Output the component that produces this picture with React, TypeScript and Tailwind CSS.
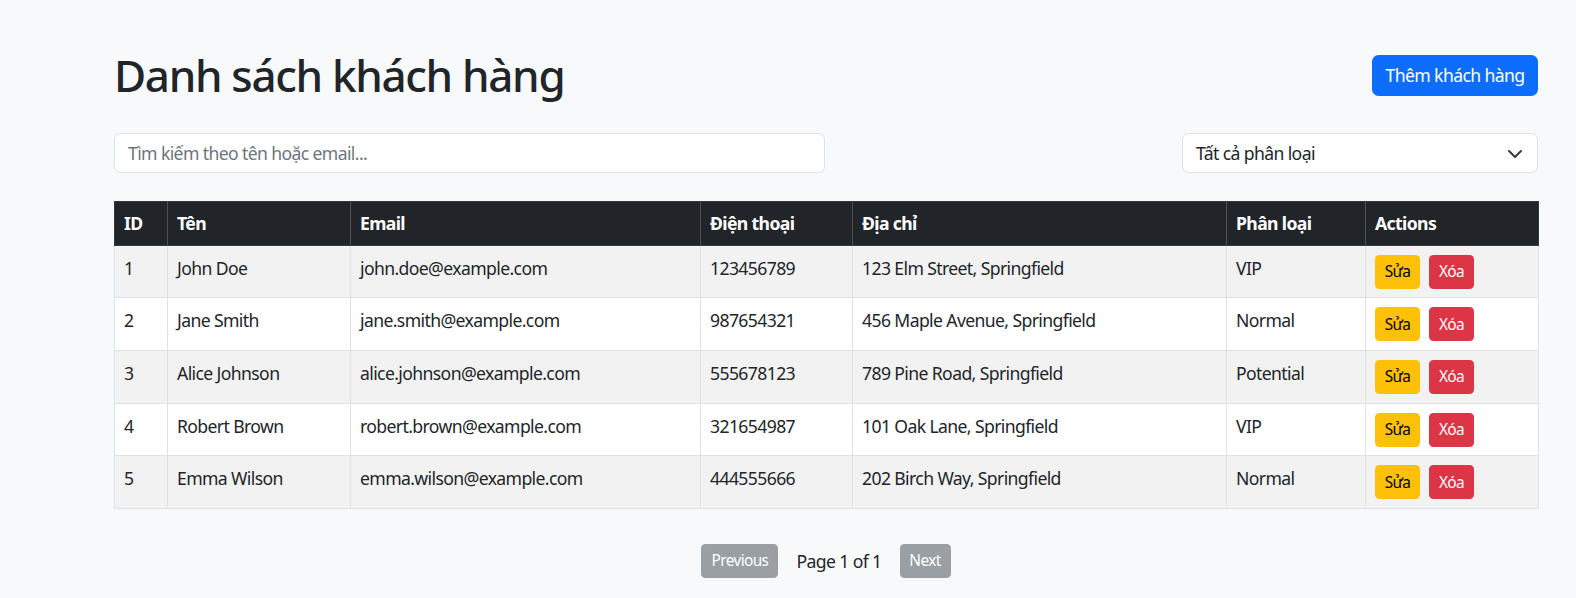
import React from 'react'

type Customer = {
  id: number
  name: string
  email: string
  phone: string
  address: string
  type: string
}

const customers: Customer[] = [
  { id: 1, name: 'John Doe', email: 'john.doe@example.com', phone: '123456789', address: '123 Elm Street, Springfield', type: 'VIP' },
  { id: 2, name: 'Jane Smith', email: 'jane.smith@example.com', phone: '987654321', address: '456 Maple Avenue, Springfield', type: 'Normal' },
  { id: 3, name: 'Alice Johnson', email: 'alice.johnson@example.com', phone: '555678123', address: '789 Pine Road, Springfield', type: 'Potential' },
  { id: 4, name: 'Robert Brown', email: 'robert.brown@example.com', phone: '321654987', address: '101 Oak Lane, Springfield', type: 'VIP' },
  { id: 5, name: 'Emma Wilson', email: 'emma.wilson@example.com', phone: '444555666', address: '202 Birch Way, Springfield', type: 'Normal' },
]

const headers = ['ID', 'Tên', 'Email', 'Điện thoại', 'Địa chỉ', 'Phân loại', 'Actions']
const widths = ['w-[53px]', 'w-[183px]', 'w-[350px]', 'w-[152px]', 'w-[374px]', 'w-[139px]', 'w-[173px]']

export default function App() {
  return (
    <div className="min-h-screen bg-[#f8f9fa] text-[#212529] font-['Noto_Sans',sans-serif] text-[17.6px] leading-[1.5] tracking-[-0.035em]">
      <div className="pl-[114px] pr-[38px] pt-[49px] pb-[20px]">
        <div className="flex items-center justify-between mb-[31px]">
          <h1 className="text-[44px] leading-[1.2] font-medium tracking-[-0.03em]">Danh sách khách hàng</h1>
          <button className="h-[41px] w-[166px] rounded-[6.6px] bg-[#0d6efd] text-white text-[17.6px]">
            Thêm khách hàng
          </button>
        </div>

        <div className="flex justify-between mb-[28px]">
          <input
            className="w-[711px] h-[40px] px-[13px] bg-white border border-[#dee2e6] rounded-[6.6px] placeholder:text-[#6c757d] outline-none"
            placeholder="Tìm kiếm theo tên hoặc email..."
          />
          <div className="relative w-[356px] h-[40px] bg-white border border-[#dee2e6] rounded-[6.6px] flex items-center px-[13px]">
            <span>Tất cả phân loại</span>
            <svg className="absolute right-[14px] top-[12px]" width="16" height="16" viewBox="0 0 16 16" fill="none">
              <path d="M2 5l6 6 6-6" stroke="#343a40" strokeWidth="2" strokeLinecap="round" strokeLinejoin="round" />
            </svg>
          </div>
        </div>

        <table className="w-full table-fixed border-collapse mb-[35px]">
          <colgroup>
            {widths.map((w, i) => (
              <col key={i} className={w} />
            ))}
          </colgroup>
          <thead>
            <tr className="bg-[#212529] text-white">
              {headers.map(h => (
                <th key={h} className="h-[44px] px-[9px] text-left font-bold border border-[#4d5154] border-t-[#32383e] border-b-[#32383e] first:border-l-[#32383e] last:border-r-[#32383e]">
                  {h}
                </th>
              ))}
            </tr>
          </thead>
          <tbody>
            {customers.map((c, i) => (
              <tr key={c.id} className={i % 2 === 0 ? 'bg-[#f2f2f2]' : 'bg-white'}>
                {[c.id, c.name, c.email, c.phone, c.address, c.type].map((v, j) => (
                  <td key={j} className="align-top px-[9px] pt-[9px] pb-[9px] h-[52.6px] border border-[#dee2e6]">
                    {v}
                  </td>
                ))}
                <td className="align-top px-[9px] pt-[9px] border border-[#dee2e6]">
                  <div className="flex gap-[9px]">
                    <button className="h-[34px] w-[45px] rounded-[4.4px] bg-[#ffc107] text-black text-[15.4px]">Sửa</button>
                    <button className="h-[34px] w-[45px] rounded-[4.4px] bg-[#dc3545] text-white text-[15.4px]">Xóa</button>
                  </div>
                </td>
              </tr>
            ))}
          </tbody>
        </table>

        <div className="flex items-center justify-center gap-[18px]">
          <button className="h-[34px] w-[77px] rounded-[4.4px] bg-[#9a9fa4] text-white text-[15.4px]">Previous</button>
          <span>Page 1 of 1</span>
          <button className="h-[34px] w-[51px] rounded-[4.4px] bg-[#9a9fa4] text-white text-[15.4px]">Next</button>
        </div>
      </div>
    </div>
  )
}
